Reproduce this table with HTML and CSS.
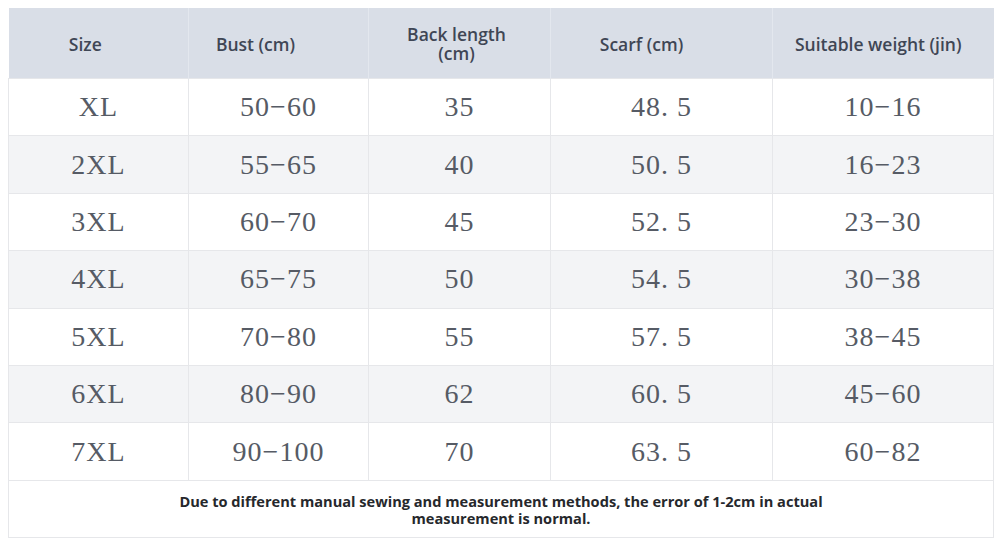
FILE: index.html
```html
<!DOCTYPE html>
<html>
<head>
<meta charset="utf-8">
<link rel="stylesheet" href="styles.css">
</head>
<body>
<table class="size-table">
  <colgroup>
    <col class="c1"><col class="c2"><col class="c3"><col class="c4"><col class="c5">
  </colgroup>
  <thead>
    <tr>
      <th class="h1">Size</th>
      <th class="h2">Bust (cm)</th>
      <th class="h3">Back length (cm)</th>
      <th class="h4">Scarf (cm)</th>
      <th class="h5">Suitable weight (jin)</th>
    </tr>
  </thead>
  <tbody>
    <tr><td>XL</td><td>50−60</td><td>35</td><td>48.&nbsp;5</td><td>10−16</td></tr>
    <tr class="alt"><td>2XL</td><td>55−65</td><td>40</td><td>50.&nbsp;5</td><td>16−23</td></tr>
    <tr><td>3XL</td><td>60−70</td><td>45</td><td>52.&nbsp;5</td><td>23−30</td></tr>
    <tr class="alt"><td>4XL</td><td>65−75</td><td>50</td><td>54.&nbsp;5</td><td>30−38</td></tr>
    <tr><td>5XL</td><td>70−80</td><td>55</td><td>57.&nbsp;5</td><td>38−45</td></tr>
    <tr class="alt"><td>6XL</td><td>80−90</td><td>62</td><td>60.&nbsp;5</td><td>45−60</td></tr>
    <tr><td>7XL</td><td>90−100</td><td>70</td><td>63.&nbsp;5</td><td>60−82</td></tr>
  </tbody>
  <tfoot>
    <tr>
      <td colspan="5"><p class="note">Due to different manual sewing and measurement methods, the error of 1-2cm in actual measurement is normal.</p></td>
    </tr>
  </tfoot>
</table>
</body>
</html>
```
FILE: styles.css
```css
html, body {
  margin: 0;
  padding: 0;
  background: #ffffff;
}
body {
  padding: 8px;
}
.size-table {
  width: 985px;
  border-collapse: collapse;
  table-layout: fixed;
}
.c1 { width: 180px; }
.c2 { width: 180px; }
.c3 { width: 182px; }
.c4 { width: 222px; }
.c5 { width: 221px; }

.size-table th {
  height: 68px;
  padding: 2px 0 0 0;
  background: #d9dee7;
  color: #3f4655;
  font-family: "Open Sans", "Noto Sans", sans-serif;
  font-weight: 600;
  font-size: 17.5px;
  line-height: 19px;
  text-align: center;
  vertical-align: middle;
  border-right: 1px solid #e3e7ee;
}
.size-table th.h1 { padding-right: 26px; }
.size-table th.h2 { padding-right: 46px; }
.size-table th.h3 { padding-left: 28px; padding-right: 34px; }
.size-table th.h4 { padding-right: 40px; }
.size-table th.h5 { padding-right: 10px; border-right: none; }

.size-table td {
  height: 56.4px;
  padding: 0;
  text-align: center;
  vertical-align: middle;
  font-family: "Liberation Serif", "DejaVu Serif", serif;
  font-size: 28px;
  color: #565b65;
  border: 1px solid #e6e7ea;
  letter-spacing: 1px;
}
.size-table tbody tr.alt td {
  background: #f3f4f6;
}
.size-table tfoot td {
  height: 56px;
  letter-spacing: 0;
}
.note {
  margin: 0 auto;
  max-width: 700px;
  padding-top: 2px;
  font-family: "Open Sans", "Noto Sans", sans-serif;
  font-weight: 700;
  font-size: 14.6px;
  line-height: 17px;
  color: #26282c;
}
```
